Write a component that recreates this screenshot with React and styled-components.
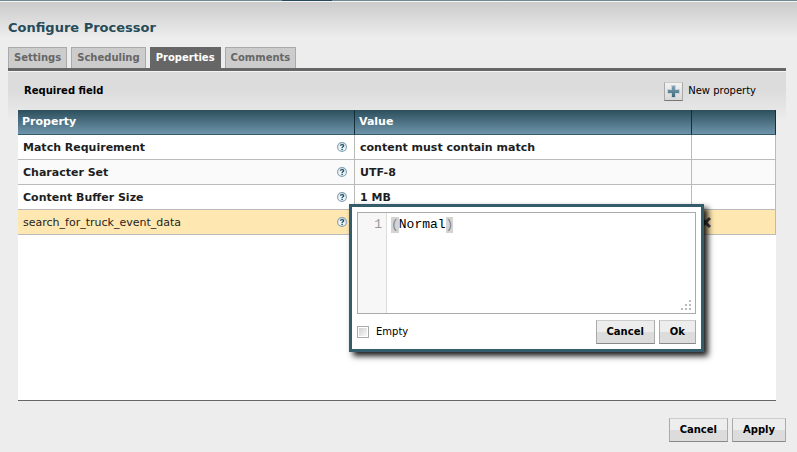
import React, { useState } from "react";
import styled, { createGlobalStyle } from "styled-components";

const GlobalStyle = createGlobalStyle`
  *, *::before, *::after { box-sizing: border-box; }
  body {
    margin: 0;
    background: #ededed;
    color: #000;
    font-family: Verdana, "DejaVu Sans", sans-serif;
    font-size: 11px;
    line-height: 14px;
  }
  button, input, textarea { font: inherit; color: inherit; margin: 0; }
`;

const Page = styled.div`
  min-height: 100vh;
`;

const CanvasStrip = styled.div`
  height: 2px;
  border-bottom: 1px solid #f6f6f6;
  background: linear-gradient(90deg, #6f8990 282px, #26485a 282px 332px, #6f8990 332px);
`;

const Dialog = styled.main`
  padding: 16px 11px 10px 8px;
  background: linear-gradient(#cbcbcb, #ededed 36px);
`;

const Title = styled.h1`
  margin: 0 0 9px;
  color: #264c5a;
  font-size: 13px;
  line-height: 20px;
`;

const TabList = styled.div`
  display: flex;
  gap: 4px;
  border-bottom: 3px solid #666;
`;

const Tab = styled.button`
  height: 21px;
  padding: 0 5px;
  border: 1px solid ${(p) => (p.$active ? "#666" : "#aaa")};
  border-bottom: 0;
  background: ${(p) => (p.$active ? "#666" : "#ccc")};
  color: ${(p) => (p.$active ? "#fff" : "#666")};
  font-size: 10px;
  font-weight: bold;
`;

const Panel = styled.section`
  padding: 0 10px;
  border-top: 1px solid #f4f4f4;
  background: linear-gradient(#dcdcdc 18px, #ededed 50px);
`;

const PanelHeader = styled.div`
  display: flex;
  align-items: center;
  justify-content: space-between;
  height: 38px;
  padding: 0 20px 0 6px;
`;

const RequiredLabel = styled.span`
  font-size: 10px;
  font-weight: bold;
`;

const NewPropertyButton = styled.button`
  display: flex;
  align-items: center;
  gap: 5px;
  padding: 0;
  border: 0;
  background: none;
  font-size: 10px;
`;

const PlusBox = styled.span`
  display: flex;
  align-items: center;
  justify-content: center;
  width: 19px;
  height: 19px;
  border: 1px solid #aaa;
  border-top-color: #ccc;
  border-bottom-color: #777;
  background: linear-gradient(#f2f2f2, #d9d9d9);
`;

const TableArea = styled.div`
  min-height: 291px;
  border-bottom: 1px solid #666;
  background: #fff;
`;

const PropertyTable = styled.table`
  width: 100%;
  table-layout: fixed;
  border-spacing: 0;
`;

const ActionsCol = styled.col`
  width: 84px;
`;

const HeadRow = styled.tr`
  background: linear-gradient(#2c4f5c, #7197ae);
`;

const HeadCell = styled.th`
  height: 25px;
  padding: 0 4px;
  border-right: 1px solid #12303b;
  border-bottom: 1px solid #365c6a;
  color: #fff;
  font-size: 11px;
  text-align: left;
`;

const Row = styled.tr`
  background: ${(p) => (p.$selected ? "#ffe7b1" : "#fff")};
  font-weight: ${(p) => (p.$required ? "bold" : "normal")};
  &:nth-child(2) { background: #fafafa; }
`;

const Cell = styled.td`
  position: relative;
  height: 25px;
  padding: 2px 5px 0;
  border-right: 1px solid #bbb;
  border-bottom: 1px solid #bbb;
  color: #1e1e1e;
`;

const NameLine = styled.div`
  display: flex;
  align-items: flex-start;
  justify-content: space-between;
  padding-right: 2px;
`;

const ActionCell = styled(Cell)`
  padding: 2px 7px 0;
`;

const DeleteButton = styled.button`
  display: block;
  width: 14px;
  height: 14px;
  padding: 0;
  border: 0;
  background: none;
`;

const EditorPopup = styled.form`
  position: absolute;
  z-index: 2;
  top: -6px;
  left: -6px;
  width: calc(100% + 19px);
  padding: 5px;
  border: 3px solid #355c6b;
  background: #fff;
  color: #000;
  box-shadow: 4px 4px 6px rgba(0, 0, 0, 0.9);
`;

const CodeBox = styled.div`
  position: relative;
  display: flex;
  height: 102px;
  border: 1px solid #aaa;
  font-family: "Courier New", "Liberation Mono", monospace;
  font-size: 13px;
  line-height: 16px;
`;

const Gutter = styled.div`
  width: 29px;
  padding: 4px 4px 0;
  border-right: 1px solid #ddd;
  background: #f7f7f7;
  color: #999;
  text-align: right;
`;

const CodeArea = styled.div`
  position: relative;
  flex: 1;
  min-width: 0;
  padding: 4px 4px 0;
`;

const CodeInput = styled.textarea`
  display: block;
  width: 100%;
  height: 90px;
  padding: 0;
  border: 0;
  outline: 0;
  resize: none;
  background: none;
`;

const BracketMark = styled.span`
  position: absolute;
  top: 4px;
  left: ${(p) => `calc(4px + ${p.$column}ch)`};
  width: 1ch;
  height: 16px;
  background: rgba(191, 191, 191, 0.67);
  pointer-events: none;
`;

const ResizeGrip = styled.svg`
  position: absolute;
  right: 4px;
  bottom: 3px;
`;

const EditorFooter = styled.div`
  display: flex;
  align-items: center;
  justify-content: space-between;
  padding-top: 6px;
`;

const EmptyLabel = styled.label`
  display: flex;
  align-items: center;
  gap: 7px;
  height: 22px;
  font-size: 10px;
`;

const Checkbox = styled.input`
  appearance: none;
  width: 12px;
  height: 12px;
  border: 1px solid #aaa;
  background: linear-gradient(135deg, #ccc, #fff);
  box-shadow: inset 0 0 0 1px #fff;
  &:checked { background: #355c6b; }
`;

const ButtonGroup = styled.div`
  display: flex;
  justify-content: flex-end;
  gap: 4px;
`;

const Button = styled.button`
  height: 24px;
  padding: 0 10px;
  border: 1px solid #aaa;
  border-top-color: #ccc;
  border-bottom-color: #888;
  background: linear-gradient(#ededed 50%, #dcdcdc 50%);
  font-size: 10px;
  font-weight: bold;
`;

const DialogFooter = styled(ButtonGroup)`
  padding-top: 17px;
`;

const PlusIcon = () => (
  <svg width="13" height="13" viewBox="0 0 13 13" aria-hidden="true">
    <defs>
      <linearGradient id="plus" x1="0" y1="0" x2="0" y2="1">
        <stop offset="0" stopColor="#7fa5b7" />
        <stop offset="1" stopColor="#3d687b" />
      </linearGradient>
    </defs>
    <path d="M4 0h5v4h4v5H9v4H4V9H0V4h4z" fill="#c9d0d3" />
    <path d="M5 1h3v4h4v3H8v4H5V8H1V5h4z" fill="url(#plus)" />
  </svg>
);

const HelpIcon = () => (
  <svg width="10" height="12" viewBox="0 -1 10 12" role="img" aria-label="Help">
    <circle cx="5" cy="5" r="4.4" fill="#edf4f8" stroke="#7fa0b2" strokeWidth="1.1" />
    <path d="M3.4 3.8C3.4 2.2 6.7 2.1 6.7 3.8C6.7 4.9 5.1 4.7 5.1 6" fill="none" stroke="#234c62" strokeWidth="1.3" />
    <path d="M4.4 6.8h1.4v1.3H4.4z" fill="#234c62" />
  </svg>
);

const CrossIcon = () => (
  <svg width="14" height="14" viewBox="0 0 14 14" aria-hidden="true">
    <path d="M2 2L11 11M11 2L2 11" stroke="#444" strokeWidth="3" />
  </svg>
);

const tabs = ["Settings", "Scheduling", "Properties", "Comments"];

const properties = [
  { name: "Match Requirement", value: "content must contain match", required: true },
  { name: "Character Set", value: "UTF-8", required: true },
  { name: "Content Buffer Size", value: "1 MB", required: true },
  { name: "search_for_truck_event_data", editing: true },
];

function ValueEditor() {
  const [text, setText] = useState("(Normal)");
  return (
    <EditorPopup onSubmit={(e) => e.preventDefault()}>
      <CodeBox>
        <Gutter>1</Gutter>
        <CodeArea>
          <CodeInput
            aria-label="Property value"
            spellCheck={false}
            value={text}
            onChange={(e) => setText(e.target.value)}
          />
          {text.startsWith("(") && text.endsWith(")") && (
            <>
              <BracketMark $column={0} />
              <BracketMark $column={text.length - 1} />
            </>
          )}
        </CodeArea>
        <ResizeGrip width="10" height="10" viewBox="0 0 10 10" aria-hidden="true">
          <path d="M8 0h2v2H8zM4 4h2v2H4zM8 4h2v2H8zM0 8h2v2H0zM4 8h2v2H4zM8 8h2v2H8z" fill="#bbb" />
        </ResizeGrip>
      </CodeBox>
      <EditorFooter>
        <EmptyLabel>
          <Checkbox type="checkbox" />
          Empty
        </EmptyLabel>
        <ButtonGroup>
          <Button type="button">Cancel</Button>
          <Button type="submit">Ok</Button>
        </ButtonGroup>
      </EditorFooter>
    </EditorPopup>
  );
}

export default function App() {
  const [active, setActive] = useState("Properties");
  return (
    <Page>
      <GlobalStyle />
      <CanvasStrip />
      <Dialog>
        <Title>Configure Processor</Title>
        <TabList role="tablist">
          {tabs.map((tab) => (
            <Tab
              key={tab}
              role="tab"
              aria-selected={tab === active}
              $active={tab === active}
              onClick={() => setActive(tab)}
            >
              {tab}
            </Tab>
          ))}
        </TabList>
        <Panel>
          <PanelHeader>
            <RequiredLabel>Required field</RequiredLabel>
            <NewPropertyButton>
              <PlusBox>
                <PlusIcon />
              </PlusBox>
              New property
            </NewPropertyButton>
          </PanelHeader>
          <TableArea>
            <PropertyTable>
              <colgroup>
                <col />
                <col />
                <ActionsCol />
              </colgroup>
              <thead>
                <HeadRow>
                  <HeadCell>Property</HeadCell>
                  <HeadCell>Value</HeadCell>
                  <HeadCell aria-label="Actions" />
                </HeadRow>
              </thead>
              <tbody>
                {properties.map((p) => (
                  <Row key={p.name} $required={p.required} $selected={p.editing}>
                    <Cell>
                      <NameLine>
                        {p.name}
                        <HelpIcon />
                      </NameLine>
                    </Cell>
                    <Cell>{p.editing ? <ValueEditor /> : p.value}</Cell>
                    <ActionCell>
                      {p.editing && (
                        <DeleteButton aria-label="Delete property">
                          <CrossIcon />
                        </DeleteButton>
                      )}
                    </ActionCell>
                  </Row>
                ))}
              </tbody>
            </PropertyTable>
          </TableArea>
        </Panel>
        <DialogFooter>
          <Button type="button">Cancel</Button>
          <Button type="button">Apply</Button>
        </DialogFooter>
      </Dialog>
    </Page>
  );
}
